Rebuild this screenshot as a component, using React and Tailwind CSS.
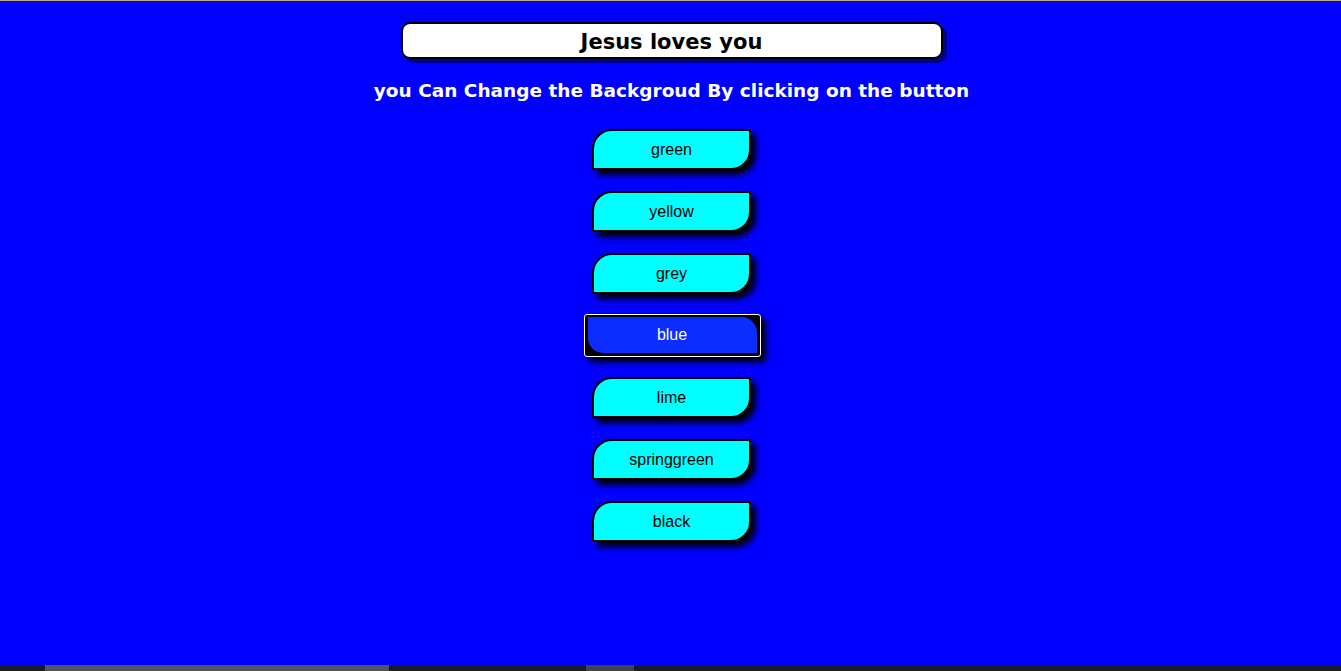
const COLORS = ['green', 'yellow', 'grey', 'blue', 'lime', 'springgreen', 'black']

export default function App() {
  const active = 'blue'
  return (
    <div className="h-[671px] w-full flex flex-col bg-[#0000ff] overflow-hidden">
      <div className="h-px bg-[#c9a878]" />
      <div className="flex-1 flex flex-col items-center pl-[2px]">
        <div className="mt-[21px] w-[542px] h-[37px] bg-white border-2 border-black rounded-[9px] shadow-[4px_4px_0_#00008b] flex items-center justify-center pt-[4px]">
          <h1 className="font-['DejaVu_Sans',sans-serif] font-bold text-[21px] text-black leading-none">Jesus loves you</h1>
        </div>
        <p className="mt-[21px] font-['DejaVu_Sans',sans-serif] font-bold text-[18.5px] text-white leading-[22px]">you Can Change the Backgroud By clicking on the button</p>
        <div className="mt-[27px] flex flex-col items-center gap-[21px] font-['Liberation_Sans',Arial,sans-serif] text-[16px]">
          {COLORS.map(c => c === active ? (
            <div key={c} className="ml-[1px] h-[43px] w-[177px] -my-px border border-white rounded-[3px] bg-black p-px shadow-[5px_5px_6px_#000]">
              <button className="w-full h-full bg-[#0b2dff] text-white border-l-2 border-b-2 border-t border-r-2 border-black rounded-tr-[17px] rounded-bl-[17px]">{c}</button>
            </div>
          ) : (
            <button key={c} className="h-[41px] w-[159px] bg-[#00ffff] text-black border-2 border-black rounded-tl-[20px] rounded-br-[20px] shadow-[5px_5px_6px_#000]">{c}</button>
          ))}
        </div>
      </div>
      <div className="h-[6px] bg-[#1c1c1c] flex items-stretch">
        <div className="ml-[45px] w-[344px] bg-[#555]" />
        <div className="ml-[197px] w-[48px] bg-[#444]" />
      </div>
    </div>
  )
}
